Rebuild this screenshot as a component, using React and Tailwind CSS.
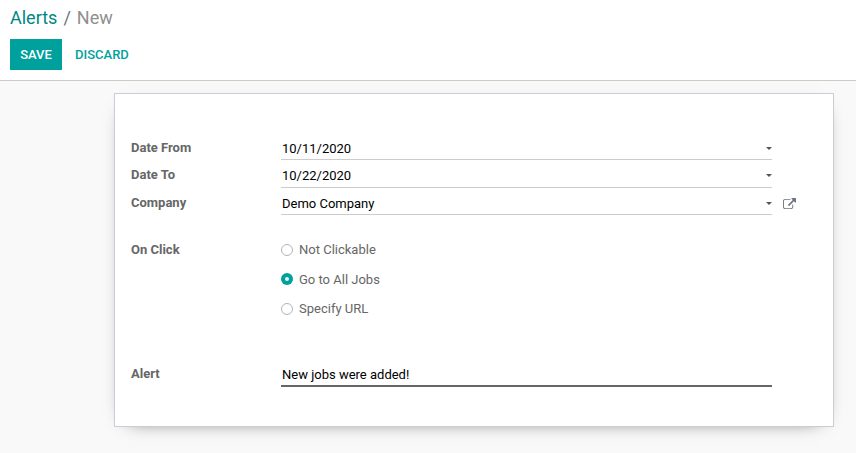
function Caret() {
  return (
    <svg width="6" height="3" viewBox="0 0 6 3" className="mt-[10px] shrink-0 self-start fill-[#555555]">
      <path d="M0 0h6L3 3z" />
    </svg>
  );
}

function ExternalLink() {
  return (
    <svg width="13" height="11.14" viewBox="0 0 1792 1536" className="ml-[11px] shrink-0 fill-[#6c757d]">
      <path d="M1408 928v320q0 119-84.5 203.5T1120 1536H288q-119 0-203.5-84.5T0 1248V416q0-119 84.5-203.5T288 128h704q14 0 23 9t9 23v64q0 14-9 23t-23 9H288q-66 0-113 47t-47 113v832q0 66 47 113t113 47h832q66 0 113-47t47-113V928q0-14 9-23t23-9h64q14 0 23 9t9 23zm384-864v512q0 26-19 45t-45 19-45-19l-176-176-652 652q-10 10-23 10t-23-10L695 983q-10-10-10-23t10-23l652-652-176-176q-19-19-19-45t19-45 45-19h512q26 0 45 19t19 45z" />
    </svg>
  );
}

function Label({ children }) {
  return <div className="w-[150px] shrink-0 font-bold leading-[22px] text-[#666666]">{children}</div>;
}

function SelectRow({ label, value, className, children }) {
  return (
    <div className={`flex ${className}`}>
      <Label>{label}</Label>
      <div className="flex w-[491px] items-start justify-between border-b border-[#cccccc] pl-px text-black">
        <span className="leading-6">{value}</span>
        <Caret />
      </div>
      {children}
    </div>
  );
}

function Radio({ label, checked }) {
  return (
    <div className="flex items-center gap-1.5">
      {checked ? (
        <span className="-mt-px flex size-3 items-center justify-center rounded-full bg-[#00a09d]">
          <span className="size-1 rounded-full bg-[#e6f5f5]" />
        </span>
      ) : (
        <span className="size-3 rounded-full border border-[#adb5bd] bg-white" />
      )}
      <span className="leading-5">{label}</span>
    </div>
  );
}

export default function App() {
  return (
    <div className="flex h-[453px] w-[856px] flex-col overflow-hidden bg-[#f9f9f9] font-['Roboto',sans-serif] text-[13px] text-[#666666]">
      <header className="h-[81px] shrink-0 border-b border-[#cccccc] bg-white px-2.5 pt-1">
        <nav className="flex h-7 items-center text-[18px] leading-7">
          <span className="text-[#008784]">Alerts</span>
          <span className="px-1.5 text-[#6c757d]">/</span>
          <span className="text-[#8f8f8f]">New</span>
        </nav>
        <div className="mt-[7px] flex h-[31px] font-medium">
          <button className="w-[52px] bg-[#00a09d] text-white">SAVE</button>
          <button className="ml-[13px] text-[#00a09d]">DISCARD</button>
        </div>
      </header>
      <main className="ml-[114px] mt-3 flex h-[334px] w-[720px] flex-col border border-[#c9cdd5] bg-white pl-4 pt-[43px] shadow-[0_5px_20px_-15px_black]">
        <SelectRow label="Date From" value="10/11/2020" className="h-[23px]" />
        <SelectRow label="Date To" value="10/22/2020" className="mt-1 h-6" />
        <SelectRow label="Company" value="Demo Company" className="mt-1 h-[23px]">
          <div className="flex items-center">
            <ExternalLink />
          </div>
        </SelectRow>
        <div className="mt-6 flex">
          <Label>On Click</Label>
          <div className="mt-px flex flex-col gap-[9.5px]">
            <Radio label="Not Clickable" />
            <Radio label="Go to All Jobs" checked />
            <Radio label="Specify URL" />
          </div>
        </div>
        <div className="mt-11 flex h-6">
          <Label>Alert</Label>
          <div className="w-[491px] border-b-2 border-[#666666] pl-px leading-6 text-black">New jobs were added!</div>
        </div>
      </main>
    </div>
  );
}
